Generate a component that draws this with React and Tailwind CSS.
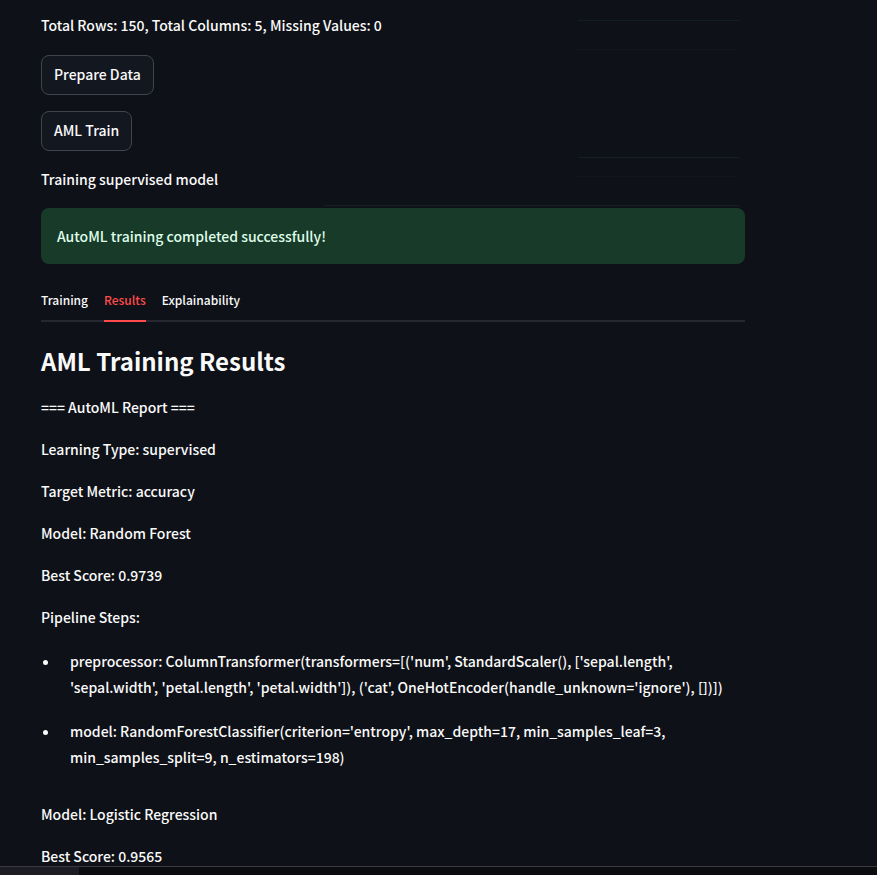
const report = [
  '=== AutoML Report ===',
  'Learning Type: supervised',
  'Target Metric: accuracy',
  'Model: Random Forest',
  'Best Score: 0.9739',
  'Pipeline Steps:',
];

const steps = [
  "preprocessor: ColumnTransformer(transformers=[('num', StandardScaler(), ['sepal.length', 'sepal.width', 'petal.length', 'petal.width']), ('cat', OneHotEncoder(handle_unknown='ignore'), [])])",
  "model: RandomForestClassifier(criterion='entropy', max_depth=17, min_samples_leaf=3, min_samples_split=9, n_estimators=198)",
];

const tabs = ['Training', 'Results', 'Explainability'];

function ActionButton({ children }) {
  return (
    <button
      type="button"
      className="h-10 rounded-lg border border-[#41444c] bg-[#131720] px-3 pb-0.5"
    >
      {children}
    </button>
  );
}

function StatusLine({ children }) {
  return <p className="pb-0.5 leading-6">{children}</p>;
}

// Faint hairlines left behind the page content
function Hairlines() {
  return (
    <div aria-hidden="true" className="pointer-events-none absolute inset-0">
      <div className="absolute left-[578px] top-5 h-px w-[161px] bg-[#14201f]" />
      <div className="absolute left-[578px] top-[49px] h-px w-[160px] bg-[#12181a]" />
      <div className="absolute left-[578px] top-[157px] h-px w-[161px] bg-[#14201f]" />
      <div className="absolute left-[578px] top-[176px] h-px w-[160px] bg-[#12181a]" />
      <div className="absolute left-[324px] top-[205px] h-px w-[415px] bg-[#14201f]" />
    </div>
  );
}

export default function App() {
  return (
    <div className="flex h-screen flex-col bg-[#0e1117] font-['Noto_Sans_CJK_SC','Noto_Sans',sans-serif] text-[14px] font-medium leading-[26px] text-[#fafafa]">
      <main className="relative min-h-0 flex-1 overflow-hidden pl-[41px] pr-4 pt-[13px]">
        <Hairlines />
        <div className="relative flex max-w-[704px] flex-col">
          <div className="flex flex-col items-start gap-4">
            <StatusLine>Total Rows: 150, Total Columns: 5, Missing Values: 0</StatusLine>
            <ActionButton>Prepare Data</ActionButton>
            <ActionButton>AML Train</ActionButton>
            <StatusLine>Training supervised model</StatusLine>
          </div>

          <div
            role="status"
            className="mt-[15px] rounded-lg bg-[#183a28] px-4 py-[15px] text-[#dffde9]"
          >
            AutoML training completed successfully!
          </div>

          <div role="tablist" className="mt-4 flex gap-4 border-b-2 border-[#262730]">
            {tabs.map((tab) => (
              <button
                key={tab}
                type="button"
                role="tab"
                aria-selected={tab === 'Results'}
                className={
                  tab === 'Results'
                    ? '-mb-0.5 h-[42px] border-b-2 border-[#ff4b4b] text-[12px] text-[#ff4b4b]'
                    : 'h-10 text-[12px]'
                }
              >
                {tab}
              </button>
            ))}
          </div>

          <section>
            <h2 className="mt-[22px] mb-4 text-[24px] font-semibold leading-[34px]">
              AML Training Results
            </h2>
            <div className="flex flex-col gap-4">
              {report.map((line) => (
                <p key={line}>{line}</p>
              ))}
            </div>
            <ul className="mt-[18px] mb-[31px] flex list-disc flex-col gap-[18px]">
              {steps.map((step) => (
                <li key={step} className="ml-[19px] pl-[10px]">
                  {step}
                </li>
              ))}
            </ul>
            <div className="flex flex-col gap-4">
              <p>Model: Logistic Regression</p>
              <p>Best Score: 0.9565</p>
            </div>
          </section>
        </div>
      </main>
      <footer className="h-[9px] shrink-0 border-t border-[#3a3a3e] bg-[#0b0c10]">
        <div className="h-full w-[79px] bg-[#1c1d22]" />
      </footer>
    </div>
  );
}
